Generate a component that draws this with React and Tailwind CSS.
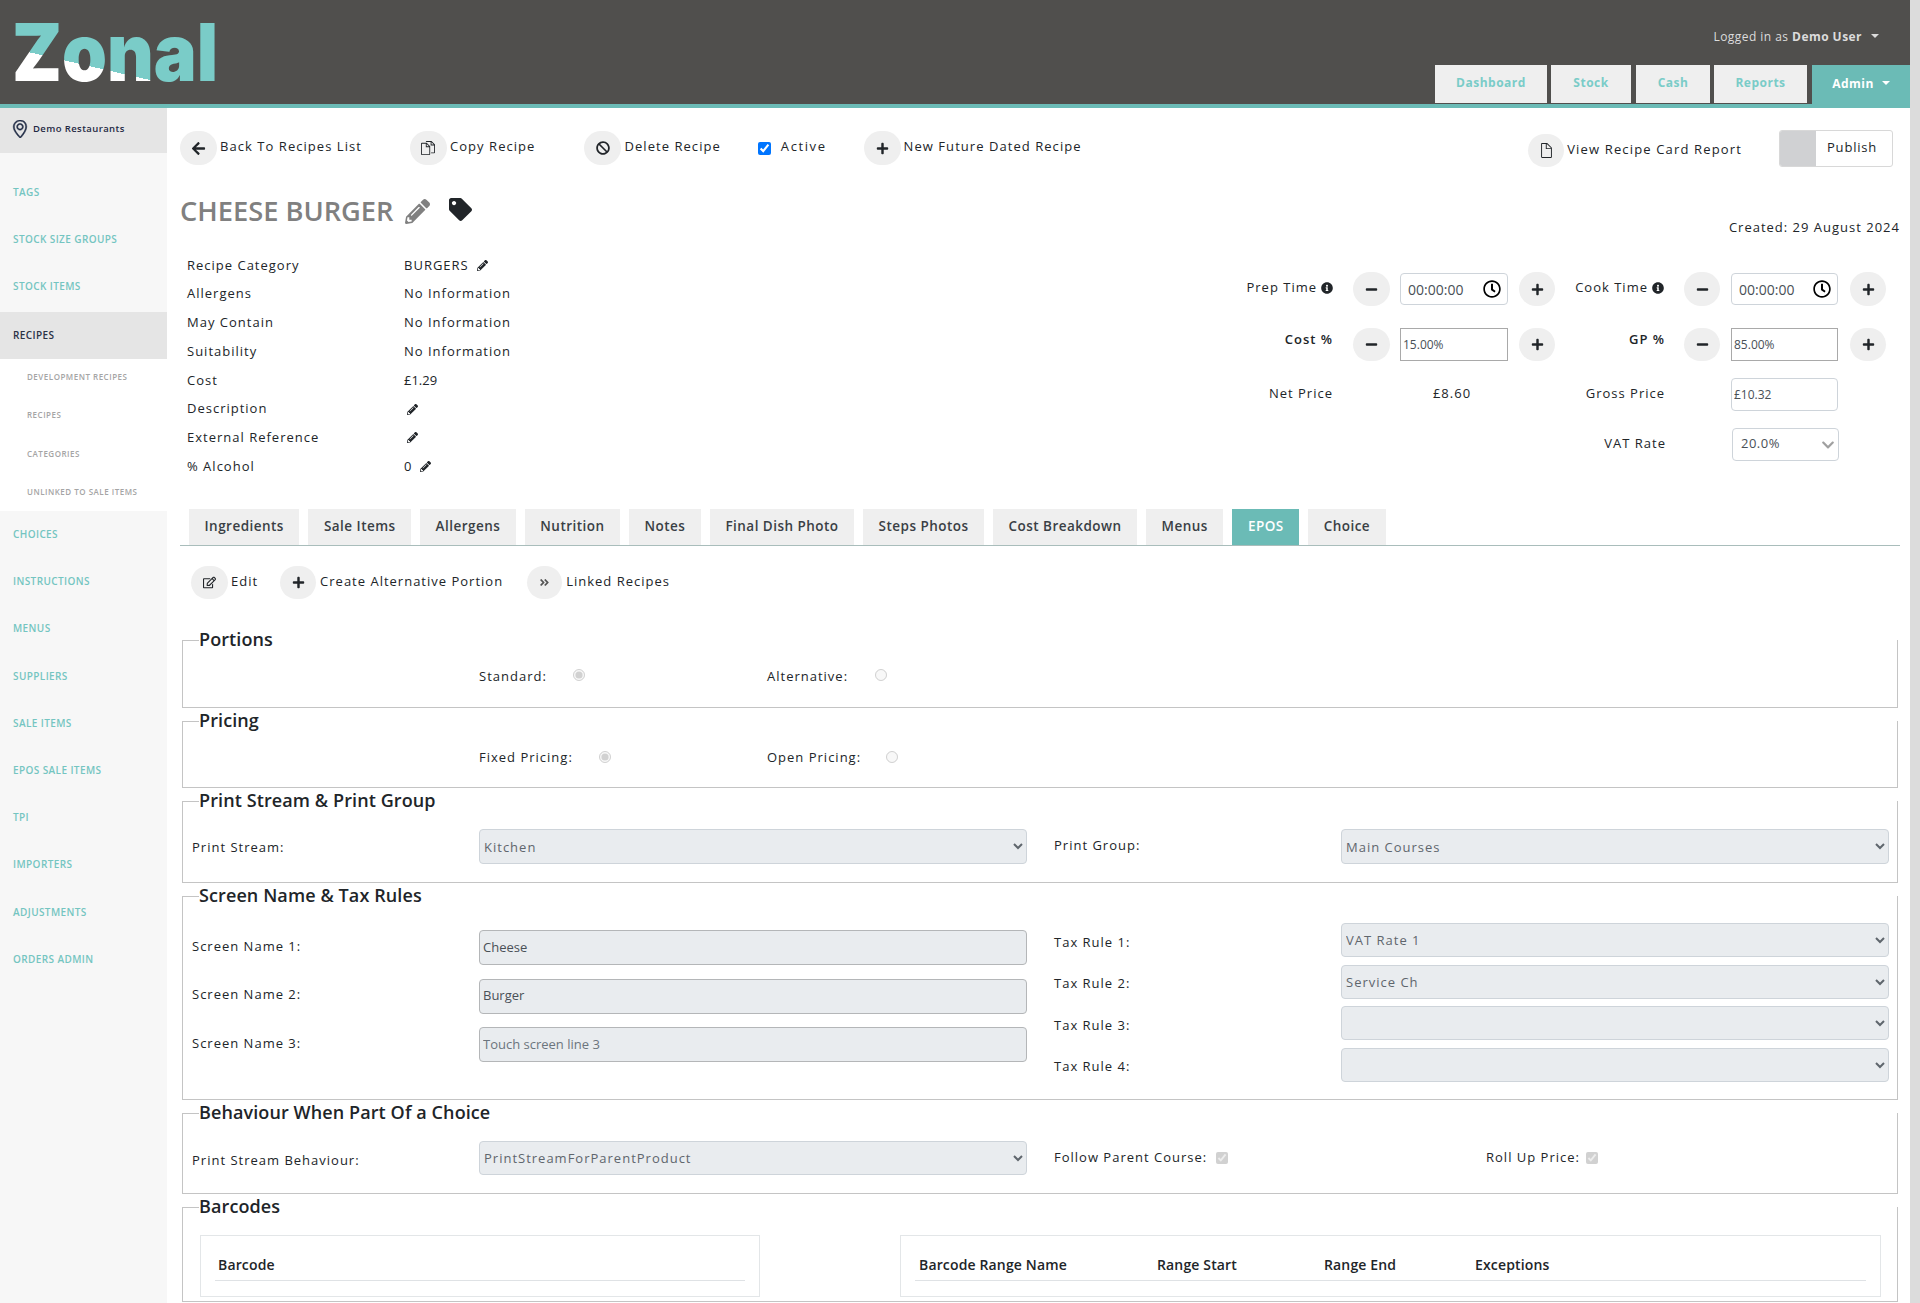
import { useId } from 'react'
import {
  FaArrowLeft,
  FaBan,
  FaPlus,
  FaMinus,
  FaPencilAlt,
  FaTag,
  FaInfoCircle,
  FaRegClock,
  FaRegEdit,
  FaAngleDoubleRight,
  FaChevronDown,
} from 'react-icons/fa'
import { SlDocs, SlDoc, SlLocationPin } from 'react-icons/sl'

const navTabs = [
  { label: 'Dashboard', width: 'w-[112px]', gap: 'mr-[4px]' },
  { label: 'Stock', width: 'w-[80px]', gap: 'mr-[5px]' },
  { label: 'Cash', width: 'w-[74px]', gap: 'mr-[4px]' },
  { label: 'Reports', width: 'w-[93px]', gap: 'mr-[5px]' },
]

const sideTop = ['TAGS', 'STOCK SIZE GROUPS', 'STOCK ITEMS']
const sideSub = ['DEVELOPMENT RECIPES', 'RECIPES', 'CATEGORIES', 'UNLINKED TO SALE ITEMS']
const sideBottom = ['CHOICES', 'INSTRUCTIONS', 'MENUS', 'SUPPLIERS', 'SALE ITEMS', 'EPOS SALE ITEMS', 'TPI', 'IMPORTERS', 'ADJUSTMENTS', 'ORDERS ADMIN']

const tabs = ['Ingredients', 'Sale Items', 'Allergens', 'Nutrition', 'Notes', 'Final Dish Photo', 'Steps Photos', 'Cost Breakdown', 'Menus', 'EPOS', 'Choice']

function Logo() {
  const id = useId()
  return (
    <svg width="260" height="104" viewBox="0 0 260 104" className="block">
      <defs>
        <linearGradient id={id} gradientUnits="userSpaceOnUse" x1="18.3" y1="42" x2="13.7" y2="62">
          <stop offset="0.5" stopColor="#7accc8" />
          <stop offset="0.5" stopColor="#ffffff" />
        </linearGradient>
      </defs>
      <text x="0" y="81" fontFamily="Inter, sans-serif" fontWeight="900" fontSize="80" textLength="206" lengthAdjust="spacingAndGlyphs" fill={`url(#${id})`}>
        Zonal
      </text>
    </svg>
  )
}

function Caret({ className }) {
  return <span className={`inline-block border-x-[4px] border-t-[4px] border-x-transparent ${className}`}></span>
}

function Circle({ children, size = 'h-[34px] w-[37px]', className = '' }) {
  return (
    <span className={`flex shrink-0 items-center justify-center rounded-full bg-[#efefef] text-[#212529] ${size} ${className}`}>
      {children}
    </span>
  )
}

function Action({ icon, label, className = '' }) {
  return (
    <div className={`flex items-center ${className}`}>
      <Circle>{icon}</Circle>
      <span className="ml-[3px] pb-[3px] text-[13px] tracking-[1.05px] text-[#212529] whitespace-nowrap">{label}</span>
    </div>
  )
}

function SideItem({ label }) {
  return (
    <div className="flex h-[47.2px] items-center pl-[13px] text-[10px] font-semibold tracking-[0.4px] text-[#74c5c1]">{label}</div>
  )
}

function InfoRow({ label, children }) {
  return (
    <div className="flex h-[28.75px] items-center text-[13px] tracking-[1px] text-[#212529]">
      <span className="w-[217px]">{label}</span>
      {children}
    </div>
  )
}

function Pencil() {
  return <FaPencilAlt className="text-[11px] text-[#212529]" />
}

function Label({ children, className = '' }) {
  return <span className={`shrink-0 text-right text-[13px] tracking-[1px] text-[#212529] ${className}`}>{children}</span>
}

function TimeInput({ width }) {
  return (
    <div className={`relative ${width}`}>
      <input
        readOnly
        value="00:00:00"
        className="h-[32px] w-full rounded-[4px] border border-[#ced4da] bg-white pl-[7px] text-[14px] text-[#495057] outline-none"
      />
      <FaRegClock className="absolute right-[7px] top-[7px] text-[18px] text-black" />
    </div>
  )
}

function PlainInput({ value, width, className = '' }) {
  return (
    <input
      readOnly
      value={value}
      className={`h-[33px] ${width} border pl-[2px] text-[12px] text-[#495057] outline-none ${className}`}
    />
  )
}

function Fieldset({ title, height, children }) {
  return (
    <fieldset className={`mx-[2px] border border-[#c4c4c4] ${height}`}>
      <legend className="ml-[16px] h-[27px] w-[calc(100%-16px)] text-[18px] leading-[25px] font-semibold tracking-[0.1px] text-[#212529]">{title}</legend>
      {children}
    </fieldset>
  )
}

function FormLabel({ children, className = '' }) {
  return <span className={`shrink-0 text-[13px] tracking-[1px] text-[#212529] whitespace-nowrap ${className}`}>{children}</span>
}

function Select({ value, height = 'h-[35px]' }) {
  return (
    <select
      disabled
      value={value}
      onChange={() => {}}
      className={`${height} w-[548px] shrink-0 rounded-[4px] border border-[#ced4da] bg-[#e9ecef] text-[13px] tracking-[1px] text-[#5f666d] opacity-100`}
    >
      <option value={value}>{value}</option>
    </select>
  )
}

function TextBox({ value, placeholder }) {
  return (
    <input
      disabled
      value={value}
      placeholder={placeholder}
      onChange={() => {}}
      className="h-[35px] w-[548px] rounded-[4px] border border-[#b4b6b8] bg-[#e9ecef] pb-[2px] pl-[3px] text-[13px] text-[#495057] placeholder:text-[#6c757d]"
    />
  )
}

function TaxRow({ label, value }) {
  return (
    <div className="flex h-[34px] items-center">
      <FormLabel className="w-[287px] pt-[5px]">{label}</FormLabel>
      <Select value={value} height="h-[34px]" />
    </div>
  )
}

function NameRow({ label, value, placeholder }) {
  return (
    <div className="flex h-[35px] items-center">
      <FormLabel className="w-[287px] pb-[2px]">{label}</FormLabel>
      <TextBox value={value} placeholder={placeholder} />
    </div>
  )
}

function Radio({ checked, className = '' }) {
  return <input type="radio" disabled checked={checked} onChange={() => {}} className={`h-[12px] w-[12px] shrink-0 ${className}`} />
}

function Check({ className = '' }) {
  return <input type="checkbox" disabled checked onChange={() => {}} className={`h-[12px] w-[12px] ${className}`} />
}

export default function App() {
  return (
    <div className="flex h-[1303px] overflow-hidden bg-white font-['Open_Sans',sans-serif]">
      <div className="w-[1910px] shrink-0">
        <header className="flex h-[108px] justify-between border-b-[4px] border-[#6bbbb6] bg-[#504f4d]">
          <div className="pl-[12px]">
            <Logo />
          </div>
          <div className="flex flex-col items-end">
            <div className="mt-[28px] mr-[31px] flex h-[18px] items-center text-[12px] tracking-[0.45px] text-[#dcdcdc]">
              Logged in as&nbsp;<b className="font-bold">Demo User</b>
              <Caret className="ml-[9px] mb-[3px] border-t-[#dcdcdc]" />
            </div>
            <nav className="mt-[19px] flex h-[39px]">
              {navTabs.map((t) => (
                <div key={t.label} className={`flex h-[38px] items-center justify-center bg-[#efefef] pb-[2px] text-[12px] font-bold tracking-[0.5px] text-[#7accc8] ${t.width} ${t.gap}`}>
                  {t.label}
                </div>
              ))}
              <div className="flex h-[39px] w-[98px] items-center justify-center bg-[#6bbbb6] pb-[2px] text-[12px] font-bold tracking-[0.5px] text-white">
                Admin
                <Caret className="ml-[8px] mb-[2px] border-t-white" />
              </div>
            </nav>
          </div>
        </header>

        <div className="flex">
          <aside className="h-[1195px] w-[167px] shrink-0 bg-[#f7f7f7]">
            <div className="flex h-[45px] items-center bg-[#e5e5e5] pl-[11px] pb-[3px] text-[9.5px] font-semibold tracking-[0.4px] text-[#1f2a44]">
              <SlLocationPin className="mr-[4px] text-[18px] text-[#1f2a44] [stroke-width:30]" stroke="currentColor" />
              Demo Restaurants
            </div>
            <div className="h-[16px]"></div>
            {sideTop.map((s) => <SideItem key={s} label={s} />)}
            <div className="mt-[1.4px] flex h-[47px] items-center bg-[#e5e5e5] pl-[13px] text-[10px] font-semibold tracking-[0.4px] text-[#2b3245]">RECIPES</div>
            <div className="h-[152px] bg-white pl-[27px] text-[8px] font-semibold tracking-[0.5px] text-[#a5a5a5]">
              {sideSub.map((s) => <div key={s} className="flex h-[38.3px] items-center pb-[2px]">{s}</div>)}
            </div>
            {sideBottom.map((s) => <SideItem key={s} label={s} />)}
          </aside>

          <main className="w-[1743px] pl-[13px] pr-[10px]">
            {/* top actions */}
            <div className="flex h-[59px] justify-between pt-[22px] pr-[7px]">
              <div className="flex h-[36px] items-center">
                <Action icon={<FaArrowLeft className="text-[15px]" />} label="Back To Recipes List" className="mr-[48px]" />
                <Action icon={<SlDocs className="text-[14px]" />} label="Copy Recipe" className="mr-[49px]" />
                <Action icon={<FaBan className="text-[14px]" />} label="Delete Recipe" className="mr-[37px]" />
                <input type="checkbox" readOnly checked className="mr-[10px] h-[13px] w-[13px] accent-[#0075ff]" />
                <span className="mr-[37px] pb-[2px] text-[13px] tracking-[1.6px] text-[#212529]">Active</span>
                <Action icon={<FaPlus className="text-[13px]" />} label="New Future Dated Recipe" />
              </div>
              <div className="flex h-[37px] items-center">
                <div className="mt-[4px] mr-[37px] flex items-center">
                  <Circle size="h-[33px] w-[36px]"><SlDoc className="text-[15px]" /></Circle>
                  <span className="ml-[3px] pb-[2px] text-[13px] tracking-[1.15px] text-[#212529]">View Recipe Card Report</span>
                </div>
                <div className="flex h-[37px] w-[114px] overflow-hidden rounded-[3px] border border-[#d8d8d8]">
                  <span className="w-[36px] bg-[#d0d1d3]"></span>
                  <span className="flex flex-1 items-center pb-[2px] pl-[11px] text-[13px] tracking-[0.8px] text-[#212529]">Publish</span>
                </div>
              </div>
            </div>

            {/* title */}
            <div className="mt-[27px] flex h-[43px] justify-between">
              <div className="flex h-[34px] items-center">
                <h1 className="text-[27.25px] leading-[34px] font-semibold text-[#808080] whitespace-nowrap">CHEESE BURGER</h1>
                <FaPencilAlt className="ml-[12px] text-[25px] text-[#808080]" />
                <FaTag className="ml-[19px] mb-[4px] text-[23px] text-[#212529]" />
              </div>
              <div className="mb-[1px] self-end text-[13px] leading-[18px] tracking-[1px] text-[#212529]">Created: 29 August 2024</div>
            </div>

            {/* details and pricing */}
            <div className="flex h-[272px] justify-between">
              <div className="pl-[7px] pt-[14px]">
                <InfoRow label="Recipe Category"><span className="flex items-center gap-[8px]">BURGERS <Pencil /></span></InfoRow>
                <InfoRow label="Allergens">No Information</InfoRow>
                <InfoRow label="May Contain">No Information</InfoRow>
                <InfoRow label="Suitability">No Information</InfoRow>
                <InfoRow label="Cost"><span className="tracking-normal">£1.29</span></InfoRow>
                <InfoRow label="Description"><span className="ml-[3px]"><Pencil /></span></InfoRow>
                <InfoRow label="External Reference"><span className="ml-[3px]"><Pencil /></span></InfoRow>
                <InfoRow label="% Alcohol"><span className="flex items-center gap-[8px]">0 <Pencil /></span></InfoRow>
              </div>

              <div className="mr-[14px] w-[646px] pt-[35px]">
                <div className="flex h-[34px] items-center">
                  <Label className="flex w-[93px] items-center justify-end gap-[4px] pb-[3px]">Prep Time <FaInfoCircle className="text-[12px]" /></Label>
                  <Circle className="ml-[20px]"><FaMinus className="text-[13px]" /></Circle>
                  <span className="ml-[10px]"><TimeInput width="w-[108px]" /></span>
                  <Circle size="h-[34px] w-[36px]" className="ml-[11px]"><FaPlus className="text-[13px]" /></Circle>
                  <Label className="ml-[19px] flex w-[90px] items-center justify-end gap-[4px] pb-[3px] whitespace-nowrap">Cook Time <FaInfoCircle className="text-[12px]" /></Label>
                  <Circle size="h-[34px] w-[36px]" className="ml-[20px]"><FaMinus className="text-[13px]" /></Circle>
                  <span className="ml-[11px]"><TimeInput width="w-[107px]" /></span>
                  <Circle size="h-[34px] w-[36px]" className="ml-[12px]"><FaPlus className="text-[13px]" /></Circle>
                </div>
                <div className="mt-[22px] flex h-[33px] items-center">
                  <Label className="w-[93px] pb-[10px] font-semibold tracking-[0.5px]">Cost %</Label>
                  <Circle size="h-[33px] w-[37px]" className="ml-[20px]"><FaMinus className="text-[13px]" /></Circle>
                  <PlainInput value="15.00%" width="ml-[10px] w-[108px]" className="border-[#a9a9a9]" />
                  <Circle size="h-[33px] w-[36px]" className="ml-[11px]"><FaPlus className="text-[13px]" /></Circle>
                  <Label className="ml-[19px] w-[91px] pb-[10px] font-semibold tracking-[0.5px]">GP %</Label>
                  <Circle size="h-[33px] w-[36px]" className="ml-[19px]"><FaMinus className="text-[13px]" /></Circle>
                  <PlainInput value="85.00%" width="ml-[11px] w-[107px]" className="border-[#a9a9a9]" />
                  <Circle size="h-[33px] w-[36px]" className="ml-[12px]"><FaPlus className="text-[13px]" /></Circle>
                </div>
                <div className="mt-[17px] flex h-[33px] items-center">
                  <Label className="w-[93px] pb-[2px]">Net Price</Label>
                  <span className="ml-[20px] w-[198px] pb-[2px] text-center text-[13px] tracking-[1px] text-[#212529]">£8.60</span>
                  <span className="w-[4px]"></span>
                  <Label className="ml-[19px] w-[91px] pb-[2px]">Gross Price</Label>
                  <PlainInput value="£10.32" width="ml-[66px] w-[107px]" className="rounded-[4px] border-[#ced4da]" />
                </div>
                <div className="mt-[17px] flex h-[33px] items-center">
                  <span className="w-[335px]"></span>
                  <Label className="w-[91px] pb-[2px]">VAT Rate</Label>
                  <div className="relative ml-[66px] flex h-[33px] w-[107px] items-center rounded-[4px] border border-[#ced4da] pb-[1px] pl-[8px] text-[13px] tracking-[0.5px] text-[#495057]">
                    20.0%
                    <FaChevronDown className="absolute right-[3px] top-[9px] text-[14px] text-[#a0a0a0]" />
                  </div>
                </div>
              </div>
            </div>

            {/* tabs */}
            <div className="flex h-[37px] gap-[9px] border-b border-[#a9bdbb] pl-[9px]">
              {tabs.map((t) => (
                <div
                  key={t}
                  className={`flex h-[36px] items-center px-[15.5px] pb-[2px] text-[13.5px] font-semibold tracking-[0.47px] ${t === 'EPOS' ? 'bg-[#6bbbb6] text-white' : 'bg-[#efefef] text-[#3a3f45]'}`}
                >
                  {t}
                </div>
              ))}
            </div>

            {/* epos actions */}
            <div className="mt-[20px] flex h-[33px] items-center pl-[11px] text-[13px] tracking-[1px] text-[#212529]">
              <Circle size="h-[33px] w-[37px]"><FaRegEdit className="text-[13px]" /></Circle>
              <span className="ml-[3px] mr-[22px] pb-[2px]">Edit</span>
              <Circle size="h-[33px] w-[36px]"><FaPlus className="text-[13px]" /></Circle>
              <span className="ml-[4px] mr-[24px] pb-[2px]">Create Alternative Portion</span>
              <Circle size="h-[33px] w-[35px]"><FaAngleDoubleRight className="text-[11px] text-[#555]" /></Circle>
              <span className="ml-[4px] pb-[2px]">Linked Recipes</span>
            </div>

            <div className="mt-[28px]">
              <Fieldset title="Portions" height="h-[81px]">
                <div className="mt-[11px] flex h-[24px] items-center">
                  <FormLabel className="ml-[296px] w-[94px]">Standard:</FormLabel>
                  <Radio checked className="mb-[4px]" />
                  <FormLabel className="ml-[182px] w-[108px]">Alternative:</FormLabel>
                  <Radio className="mb-[4px]" />
                </div>
              </Fieldset>
              <Fieldset title="Pricing" height="h-[80px]">
                <div className="mt-[11px] flex h-[24px] items-center">
                  <FormLabel className="ml-[296px] w-[120px]">Fixed Pricing:</FormLabel>
                  <Radio checked className="mb-[2px]" />
                  <FormLabel className="ml-[156px] w-[119px]">Open Pricing:</FormLabel>
                  <Radio className="mb-[2px]" />
                </div>
              </Fieldset>
              <Fieldset title="Print Stream & Print Group" height="h-[95px]">
                <div className="mt-[14px] flex h-[35px] items-center pl-[9px]">
                  <FormLabel className="w-[287px] pt-[3px]">Print Stream:</FormLabel>
                  <Select value="Kitchen" />
                  <FormLabel className="ml-[27px] w-[287px] pb-[1px]">Print Group:</FormLabel>
                  <Select value="Main Courses" />
                </div>
              </Fieldset>
              <Fieldset title="Screen Name & Tax Rules" height="h-[217px]">
                <div className="flex pl-[9px]">
                  <div className="mt-[20px] flex flex-col gap-[13.5px]">
                    <NameRow label="Screen Name 1:" value="Cheese" />
                    <NameRow label="Screen Name 2:" value="Burger" />
                    <NameRow label="Screen Name 3:" value="" placeholder="Touch screen line 3" />
                  </div>
                  <div className="mt-[13px] ml-[27px] flex flex-col gap-[7.5px]">
                    <TaxRow label="Tax Rule 1:" value="VAT Rate 1" />
                    <TaxRow label="Tax Rule 2:" value="Service Ch" />
                    <TaxRow label="Tax Rule 3:" value="" />
                    <TaxRow label="Tax Rule 4:" value="" />
                  </div>
                </div>
              </Fieldset>
              <Fieldset title="Behaviour When Part Of a Choice" height="h-[94px]">
                <div className="mt-[14px] flex h-[34px] items-center pl-[9px]">
                  <FormLabel className="w-[287px] pt-[6px]">Print Stream Behaviour:</FormLabel>
                  <Select value="PrintStreamForParentProduct" height="h-[34px]" />
                  <FormLabel className="ml-[27px] w-[162px]">Follow Parent Course:</FormLabel>
                  <Check />
                  <FormLabel className="ml-[258px] w-[100px]">Roll Up Price:</FormLabel>
                  <Check />
                </div>
              </Fieldset>
              <Fieldset title="Barcodes" height="h-[108px]">
                <div className="mt-[14px] flex pl-[17px]">
                  <div className="h-[62px] w-[560px] border border-[#e3e6e8] px-[14px]">
                    <div className="flex h-[45px] items-end border-b border-[#dfe2e5] pb-[5px] pl-[3px] text-[14px] font-semibold tracking-[0.15px] text-[#212529]">Barcode</div>
                  </div>
                  <div className="ml-[140px] h-[62px] w-[981px] border border-[#e3e6e8] px-[14px]">
                    <div className="flex h-[45px] items-end border-b border-[#dfe2e5] pb-[5px] pl-[4px] text-[14px] font-semibold tracking-[0.15px] text-[#212529]">
                      <span className="w-[238px]">Barcode Range Name</span>
                      <span className="w-[167px]">Range Start</span>
                      <span className="w-[151px]">Range End</span>
                      <span>Exceptions</span>
                    </div>
                  </div>
                </div>
              </Fieldset>
            </div>
          </main>
        </div>
      </div>
      <div className="w-[10px] bg-[#dcdcdc]"></div>
    </div>
  )
}
